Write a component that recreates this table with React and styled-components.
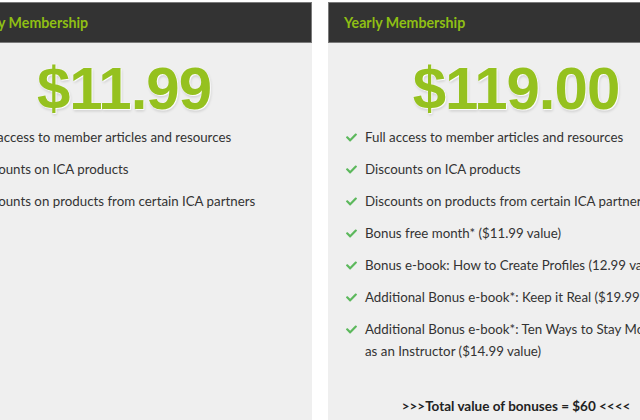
import React from 'react';
import styled, { createGlobalStyle } from 'styled-components';
import { FaCheck } from 'react-icons/fa';

const GlobalStyle = createGlobalStyle`
  html, body {
    margin: 0;
    padding: 0;
    background: #ffffff;
    overflow: hidden;
  }
  body {
    font-family: Lato, "Open Sans", "Liberation Sans", sans-serif;
  }
`;

const Page = styled.div`
  display: flex;
  gap: 16px;
  margin-left: -64px;
  padding-top: 2px;
  width: 800px;
  height: 420px;
`;

const Card = styled.div`
  width: 376px;
  flex-shrink: 0;
  background: #efefef;
  display: flex;
  flex-direction: column;
`;

const Header = styled.div`
  height: 39px;
  background: #333333;
  border: 1px solid #7a7a7a;
  display: flex;
  align-items: center;
  padding: 0 15px;
  color: #8fbf14;
  font-weight: 700;
  font-size: 14.2px;
`;

const Price = styled.div`
  padding: 11px 0 2px;
  text-align: center;
  font-family: "Liberation Sans", Arial, sans-serif;
  font-weight: 700;
  font-size: 60px;
  line-height: 70px;
  letter-spacing: -1px;
  color: #95c11f;
  text-shadow: 0 0 2px #ffffff, 1px 1px 1px #ffffff, 1px 2px 3px rgba(0, 0, 0, 0.18);
`;

const List = styled.ul`
  list-style: none;
  margin: 0;
  padding: 0 0 0 18px;
`;

const Item = styled.li`
  display: flex;
  gap: 8px;
  margin-bottom: 10px;
  font-size: 13.3px;
  line-height: 22px;
  color: #333333;
`;

const Check = styled.span`
  flex: 0 0 11px;
  height: 22px;
  display: flex;
  align-items: center;
  color: #5cb85c;
`;

const Text = styled.span`
  flex: 1;
  white-space: nowrap;
`;

const Total = styled.p`
  margin: 23px 0 0;
  text-align: center;
  font-weight: 700;
  font-size: 13.5px;
  line-height: 22px;
  color: #222222;
`;

const monthly = [
  'Full access to member articles and resources',
  'Discounts on ICA products',
  'Discounts on products from certain ICA partners',
];

const yearly = [
  'Full access to member articles and resources',
  'Discounts on ICA products',
  'Discounts on products from certain ICA partners',
  'Bonus free month* ($11.99 value)',
  'Bonus e-book: How to Create Profiles (12.99 value)',
  'Additional Bonus e-book*: Keep it Real ($19.99 value)',
];

function Benefit({ children }) {
  return (
    <Item>
      <Check><FaCheck size={11} /></Check>
      <Text>{children}</Text>
    </Item>
  );
}

export default function App() {
  return (
    <>
      <GlobalStyle />
      <Page>
        <Card>
          <Header>Monthly Membership</Header>
          <Price>$11.99</Price>
          <List>
            {monthly.map(item => (
              <Benefit key={item}>{item}</Benefit>
            ))}
          </List>
        </Card>
        <Card>
          <Header>Yearly Membership</Header>
          <Price>$119.00</Price>
          <List>
            {yearly.map(item => (
              <Benefit key={item}>{item}</Benefit>
            ))}
            <Benefit>
              Additional Bonus e-book*: Ten Ways to Stay Motivated
              <br />
              as an Instructor ($14.99 value)
            </Benefit>
          </List>
          <Total>&gt;&gt;&gt;Total value of bonuses = $60 &lt;&lt;&lt;&lt;</Total>
        </Card>
      </Page>
    </>
  );
}
